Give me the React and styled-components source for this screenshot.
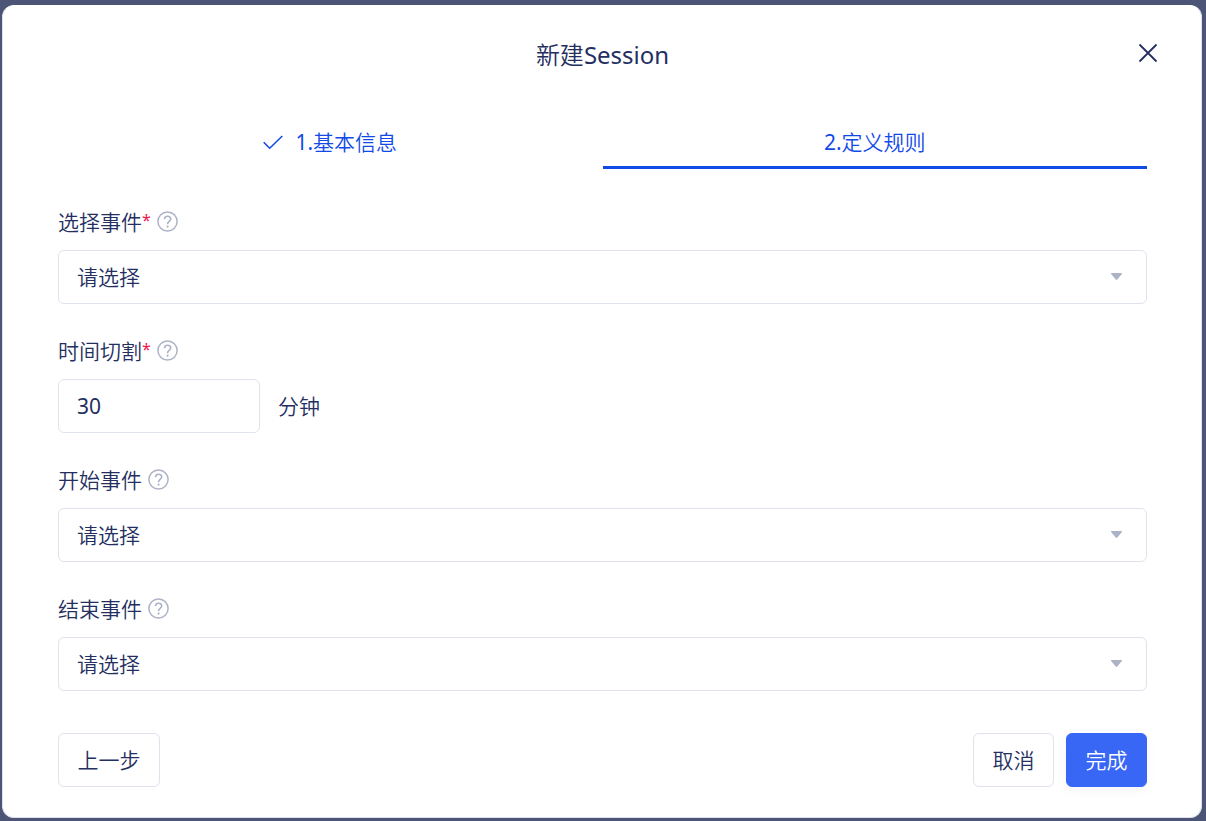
import React from "react";
import styled, { createGlobalStyle } from "styled-components";

const navy = "#242f5f";
const blue = "#124ae8";
const line = "#dfe3ee";
const grey = "#adb3c6";

const GlobalStyle = createGlobalStyle`
  * { box-sizing: border-box; }
  body {
    margin: 0;
    background: #4d5577;
    color: ${navy};
    font-family: "Noto Sans", "Noto Sans CJK SC", sans-serif;
    font-size: 21px;
    font-weight: 350;
    line-height: 30px;
  }
  button, input, select { font: inherit; color: inherit; }
`;

const Backdrop = styled.div`
  min-height: 100vh;
  padding: 5px 4px 3px 2px;
  display: flex;
`;

const Dialog = styled.section`
  flex: 1;
  display: flex;
  flex-direction: column;
  padding: 33px 54px 30px 55px;
  border: 1px solid #dde2f0;
  border-top-color: #fff;
  border-radius: 12px;
  background: #fff;
`;

const Header = styled.header`
  display: grid;
  grid-template-columns: 32px 1fr 32px;
  align-items: center;
  height: 32px;
  margin: 0 -17px;
`;

const Title = styled.h1`
  grid-column: 2;
  margin: 0;
  text-align: center;
  font-size: 24px;
  line-height: 32px;
  font-weight: inherit;
`;

const Latin = styled.span`
  font-weight: 400;
`;

const CloseButton = styled.button`
  display: flex;
  align-items: center;
  justify-content: center;
  width: 32px;
  height: 28px;
  padding: 0;
  border: 0;
  background: none;
  align-self: start;
`;

const Steps = styled.ol`
  display: grid;
  grid-template-columns: 1fr 1fr;
  margin: 56px 0 0;
  padding: 0;
  list-style: none;
`;

const Step = styled.li`
  display: flex;
  align-items: center;
  justify-content: center;
  gap: 12px;
  height: 42px;
  padding-bottom: 10px;
  color: ${blue};
  border-bottom: 3px solid ${(p) => (p.$active ? blue : "transparent")};
`;

const Form = styled.form`
  display: flex;
  flex-direction: column;
  flex: 1;
`;

const Field = styled.div`
  margin-top: 32px;
`;

const Fields = styled.div`
  padding-top: 6px;
  display: flex;
  flex-direction: column;
`;

const LabelRow = styled.div`
  display: flex;
  align-items: center;
  height: 30px;
  margin-bottom: 13px;
`;

const Required = styled.span`
  color: #f0144c;
  font-size: 16px;
  font-weight: 400;
  line-height: 16px;
  vertical-align: 4px;
`;

const HelpButton = styled.button`
  display: flex;
  margin-left: 6px;
  padding: 0 0 2px;
  border: 0;
  background: none;
`;

const SelectBox = styled.div`
  position: relative;
`;

const Select = styled.select`
  display: block;
  appearance: none;
  width: 100%;
  height: 54px;
  padding: 0 54px 0 18px;
  border: 1px solid ${line};
  border-radius: 6px;
  background: #fff;
`;

const Caret = styled.svg`
  position: absolute;
  right: 24px;
  top: 22px;
  pointer-events: none;
`;

const InputRow = styled.div`
  display: flex;
  align-items: center;
  gap: 18px;
`;

const Input = styled.input`
  && { font-weight: 400; }
  width: 202px;
  height: 54px;
  padding: 0 18px;
  border: 1px solid ${line};
  border-radius: 6px;
  background: #fff;
`;

const Footer = styled.footer`
  display: flex;
  gap: 12px;
  margin-top: 42px;
`;

const Button = styled.button`
  height: 54px;
  width: ${(p) => (p.$wide ? 102 : 81)}px;
  margin-right: ${(p) => (p.$wide ? "auto" : 0)};
  padding: 0;
  border: 1px solid ${(p) => (p.$primary ? "#3866f5" : line)};
  border-radius: 6px;
  color: ${(p) => (p.$primary ? "#fff" : navy)};
  background: ${(p) => (p.$primary ? "#3866f5" : "#fff")};
  box-shadow: ${(p) => (p.$primary ? "0 4px 12px rgba(0, 0, 0, 0.04)" : "none")};
`;

function Help({ name }) {
  return (
    <HelpButton type="button" aria-label={`${name}说明`}>
      <svg width="21" height="21" viewBox="0 0 21 21" fill="none" stroke={grey}>
        <circle cx="10.500" cy="10.500" r="9.600" strokeWidth="1.500" />
        <path d="M7.500 8.200C7.500 6.300 8.700 5.200 10.500 5.200s3.200 1.100 3.200 2.900c0 2.200-3.100 2.500-3.100 4.600v.6" strokeWidth="1.600" />
        <circle cx="10.600" cy="15.600" r="1.100" fill={grey} stroke="none" />
      </svg>
    </HelpButton>
  );
}

function FieldLabel({ id, name, required }) {
  return (
    <LabelRow>
      <label htmlFor={id}>
        {name}
        {required && <Required>*</Required>}
      </label>
      <Help name={name} />
    </LabelRow>
  );
}

function SelectField({ id, name, required }) {
  return (
    <Field>
      <FieldLabel id={id} name={name} required={required} />
      <SelectBox>
        <Select id={id}>
          <option>请选择</option>
        </Select>
        <Caret width="13" height="9" viewBox="0 0 13 9">
          <path d="M1.500 1h10q1 0 .4.900L7.300 7.400q-.8.900-1.600 0L1.100 1.900Q.5 1 1.500 1z" fill={grey} />
        </Caret>
      </SelectBox>
    </Field>
  );
}

export default function App() {
  return (
    <Backdrop>
      <GlobalStyle />
      <Dialog role="dialog" aria-labelledby="title">
        <Header>
          <Title id="title">新建<Latin>Session</Latin></Title>
          <CloseButton type="button" aria-label="关闭">
            <svg width="20" height="20" viewBox="0 0 20 20" fill="none" stroke={navy} strokeWidth="1.800">
              <path d="M1.500 1.500l17 17M18.500 1.500l-17 17" />
            </svg>
          </CloseButton>
        </Header>
        <Steps>
          <Step>
            <svg width="20" height="16" viewBox="0 0 20 16" fill="none" stroke={blue} strokeWidth="1.600">
              <path d="M.7 8.200l6 6L19.300 2" />
            </svg>
            <span><Latin>1.</Latin>基本信息</span>
          </Step>
          <Step $active aria-current="step">
            <span><Latin>2.</Latin>定义规则</span>
          </Step>
        </Steps>
        <Form onSubmit={(e) => e.preventDefault()}>
          <Fields>
            <SelectField id="event" name="选择事件" required />
            <Field>
              <FieldLabel id="split" name="时间切割" required />
              <InputRow>
                <Input id="split" defaultValue="30" />
                <span>分钟</span>
              </InputRow>
            </Field>
            <SelectField id="start" name="开始事件" />
            <SelectField id="end" name="结束事件" />
          </Fields>
          <Footer>
            <Button type="button" $wide>上一步</Button>
            <Button type="button">取消</Button>
            <Button type="submit" $primary>完成</Button>
          </Footer>
        </Form>
      </Dialog>
    </Backdrop>
  );
}
